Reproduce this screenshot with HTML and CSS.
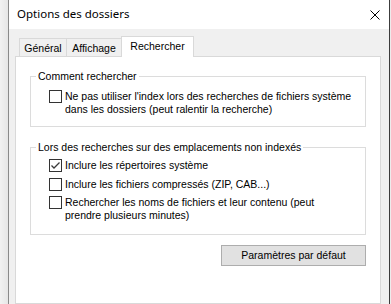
FILE: index.html
```html
<!DOCTYPE html>
<html lang="fr">
<head>
<meta charset="utf-8">
<title>Options des dossiers</title>
<link rel="stylesheet" href="styles.css">
</head>
<body>
<div class="screen">
  <div class="edge-left"></div>
  <div class="edge-line"></div>
  <div class="window">
    <div class="titlebar">
      <span class="title">Options des dossiers</span>
      <svg class="close" width="10" height="10" viewBox="0 0 10 10" aria-label="Fermer">
        <path d="M0.5 0.5 L9.5 9.5 M9.5 0.5 L0.5 9.5" stroke="#000" stroke-width="1" fill="none"/>
      </svg>
    </div>
    <div class="body">
      <div class="tabs">
        <div class="tab tab-general">Général</div>
        <div class="tab tab-affichage">Affichage</div>
        <div class="tab tab-active">Rechercher</div>
      </div>
      <div class="panel">
        <fieldset class="group group-how">
          <legend>Comment rechercher</legend>
          <div class="group-content">
            <div class="check-row">
              <span class="checkbox"></span>
              <span class="check-label">Ne pas utiliser l'index lors des recherches de fichiers système<br>dans les dossiers (peut ralentir la recherche)</span>
            </div>
          </div>
        </fieldset>
        <fieldset class="group group-unindexed">
          <legend>Lors des recherches sur des emplacements non indexés</legend>
          <div class="group-content rows">
            <div class="check-row">
              <span class="checkbox checked">
                <svg width="11" height="11" viewBox="0 0 11 11"><polyline points="1.5,5.5 4,8 9.5,2.5" fill="none" stroke="#3a3a3a" stroke-width="1.3"/></svg>
              </span>
              <span class="check-label">Inclure les répertoires système</span>
            </div>
            <div class="check-row">
              <span class="checkbox"></span>
              <span class="check-label">Inclure les fichiers compressés (ZIP, CAB...)</span>
            </div>
            <div class="check-row row-last">
              <span class="checkbox"></span>
              <span class="check-label">Rechercher les noms de fichiers et leur contenu (peut<br>prendre plusieurs minutes)</span>
            </div>
          </div>
        </fieldset>
        <div class="actions">
          <button class="btn" type="button">Paramètres par défaut</button>
        </div>
      </div>
    </div>
  </div>
  <div class="edge-line dark"></div>
  <div class="edge-right"></div>
</div>
</body>
</html>
```
FILE: styles.css
```css
* { box-sizing: border-box; }
html, body { margin: 0; padding: 0; }
body {
  font-family: "Liberation Sans", Arial, sans-serif;
  font-size: 10.5px;
  color: #000;
  background: #f0f0f0;
}
.screen {
  width: 391px;
  height: 304px;
  overflow: hidden;
  display: flex;
}
.edge-left {
  width: 8px;
  background: linear-gradient(to right, #f2f2f2, #e6e6e6);
}
.edge-line {
  width: 1px;
  background: #8a8a8a;
}
.edge-line.dark {
  background: #3c3c3c;
}
.edge-right {
  width: 1px;
  background: #ececec;
}
.window {
  width: 380px;
  display: flex;
  flex-direction: column;
}
.titlebar {
  height: 29px;
  background: #fff;
  display: flex;
  align-items: center;
  justify-content: space-between;
  padding: 0 9px 1px 8px;
}
.title {
  font-family: "Noto Sans", "Open Sans", sans-serif;
  font-size: 11.5px;
  line-height: 16px;
  color: #000;
}
.close { display: block; margin-top: 1px; }
.body {
  flex: 1;
  background: #f0f0f0;
  padding: 7px 8px 0 6px;
  display: flex;
  flex-direction: column;
}
.tabs {
  display: flex;
  align-items: flex-end;
  padding-left: 4px;
  margin-bottom: -1px;
  position: relative;
  z-index: 1;
}
.tab {
  height: 18px;
  margin-bottom: 1px;
  border: 1px solid #d9d9d9;
  border-bottom: none;
  background: #f0f0f0;
  text-align: center;
  line-height: 13px;
  padding-top: 3px;
  white-space: nowrap;
}
.tab-general { width: 48px; }
.tab-affichage { width: 56px; margin-left: -1px; }
.tab-active {
  width: 73px;
  height: 21px;
  margin-bottom: 0;
  margin-left: -1px;
  background: #fff;
  padding-top: 3px;
}
.panel {
  flex: 1;
  background: #fff;
  border: 1px solid #d9d9d9;
  padding: 13px 14px 0 14px;
}
.group {
  margin: 0;
  padding: 0;
  border: 1px solid #dcdcdc;
  min-width: 0;
}
.group legend {
  margin-left: 5px;
  padding: 0 2px;
  line-height: 13px;
}
.group-unindexed { margin-top: 14px; }
.group-content {
  padding: 7px 0 10px 18px;
}
.group-content.rows {
  padding: 5px 0 12px 18px;
  display: flex;
  flex-direction: column;
  gap: 6px;
}
.check-row {
  display: flex;
  align-items: flex-start;
}
.row-last { margin-top: -1px; }
.checkbox {
  width: 13px;
  height: 13px;
  flex: none;
  border: 1px solid #333;
  background: #fff;
  display: flex;
  align-items: center;
  justify-content: center;
}
.checkbox svg { display: block; }
.check-label {
  margin-left: 3px;
  line-height: 13px;
  white-space: nowrap;
}
.actions {
  display: flex;
  justify-content: flex-end;
  margin-top: 10px;
}
.btn {
  width: 145px;
  height: 21px;
  background: #e1e1e1;
  border: 1px solid #adadad;
  font-family: "Liberation Sans", Arial, sans-serif;
  font-size: 10.5px;
  color: #000;
  padding: 0;
  line-height: 19px;
}
```
